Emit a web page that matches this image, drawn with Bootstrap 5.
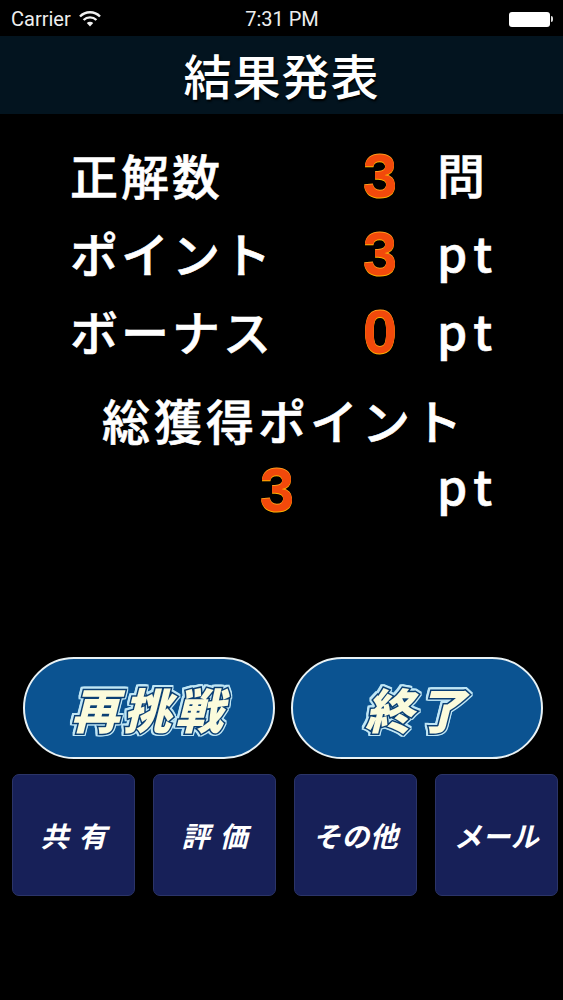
<!DOCTYPE html>
<html lang="ja">
<head>
<meta charset="utf-8">
<title>結果発表</title>
<link href="https://cdn.jsdelivr.net/npm/bootstrap@5.3.0/dist/css/bootstrap.min.css" rel="stylesheet">
<style>
html,body{background:#000;color:#fff;height:1000px;overflow:hidden;font-family:"Noto Sans CJK JP","Liberation Sans",sans-serif}
.status-strip{height:36px;padding:2px 10px 0 11px;font-family:Roboto,"Liberation Sans",sans-serif;font-size:20px;line-height:34px;color:#eee}
.status-side{flex:1 1 0}
.batt-body{width:41px;height:15px;background:#fff;border-radius:3px}
.batt-tip{width:2px;height:6px;background:#ddd;border-radius:0 2px 2px 0;margin-left:1px}
.title-strip{height:78px;background:#03141f;font-size:48px;font-weight:500;letter-spacing:1px;line-height:76px;text-shadow:1px 2px 2px #000}
.score-area{padding-top:23px}
.score-row{display:grid;grid-template-columns:253px 70px auto;column-gap:22px;height:78px;padding-left:70px;align-items:center;font-size:48px;font-weight:500;letter-spacing:3px;line-height:1;-webkit-text-stroke:.6px #fff}
.score-row>div:first-child{margin-top:-4px}
.score-unit{font-size:48px;font-weight:500;letter-spacing:7px;margin-top:-6px;-webkit-text-stroke:.6px #fff}
.score-value{font-family:"Liberation Sans",sans-serif;font-weight:700;font-size:62px;letter-spacing:0;text-align:center;color:#f2490b;-webkit-text-stroke:0;text-shadow:0 1px 0 #ffb400,0 -1px 0 #ff9a1a}
.total-head{margin-top:19px;height:60px;font-size:48px;font-weight:500;letter-spacing:4px;line-height:58px;text-align:center;padding-left:5px;-webkit-text-stroke:.6px #fff}
.total-row{display:grid;grid-template-columns:170px 70px 1fr;height:80px;padding-left:72px;align-items:center;line-height:1}
.total-row .score-unit{padding-left:125px;margin-top:-12px}
.action-row{margin-top:127px;padding:0 20px 0 23px;gap:16px}
.pill-btn{flex:0 0 252px;height:102px;border:2.5px solid #e9f2f5;border-radius:51px;background:#0b5391;display:flex;align-items:center;justify-content:center;padding:0}
.pill-label{font-size:48px;font-weight:900;font-style:italic;letter-spacing:4px;line-height:1;color:#fbfbdc;-webkit-text-stroke:3px #0a3f74;paint-order:stroke fill;filter:drop-shadow(1.5px 0 0 #bfe6f5) drop-shadow(-1.5px 0 0 #bfe6f5) drop-shadow(0 1.5px 0 #bfe6f5) drop-shadow(0 -1.5px 0 #bfe6f5)}
.tile-row{margin-top:15px;padding:0 6px 0 12px;gap:18px}
.tile-btn{flex:0 0 123px;height:122px;background:#172058;border:1px solid #2b3468;border-radius:7px;color:#fff;font-size:28px;font-weight:700;font-style:italic;display:flex;align-items:center;justify-content:center;padding:0;line-height:1;white-space:nowrap}
.tile-gap{letter-spacing:10px;margin-right:-10px}
.tile-wide{font-size:28px;letter-spacing:.5px}
</style>
</head>
<body>
<div class="status-strip d-flex align-items-center">
  <div class="status-side d-flex align-items-center gap-2">
    <span>Carrier</span>
    <svg width="22" height="16" viewBox="0 0 22 16" fill="none" stroke="#f2f2f2" stroke-width="2.4" aria-hidden="true"><path d="M1 5.5a14 14 0 0 1 20 0"/><path d="M4.6 9a9 9 0 0 1 12.8 0"/><path d="M11 15.5l-3.2-3.4a4.6 4.6 0 0 1 6.4 0z" fill="#f2f2f2" stroke="none"/></svg>
  </div>
  <div>7:31 PM</div>
  <div class="status-side d-flex align-items-center justify-content-end">
    <div class="batt-body"></div><div class="batt-tip"></div>
  </div>
</div>
<div class="title-strip text-center">結果発表</div>
<div class="score-area">
  <div class="score-row"><div>正解数</div><div class="score-value">3</div><div class="score-unit">問</div></div>
  <div class="score-row"><div>ポイント</div><div class="score-value">3</div><div class="score-unit">pt</div></div>
  <div class="score-row"><div>ボーナス</div><div class="score-value">0</div><div class="score-unit">pt</div></div>
  <div class="total-head">総獲得ポイント</div>
  <div class="total-row"><div></div><div class="score-value">3</div><div class="score-unit">pt</div></div>
</div>
<div class="action-row d-flex">
  <button type="button" class="btn pill-btn"><span class="pill-label">再挑戦</span></button>
  <button type="button" class="btn pill-btn"><span class="pill-label">終了</span></button>
</div>
<div class="tile-row d-flex">
  <button type="button" class="btn tile-btn"><span class="tile-gap">共有</span></button>
  <button type="button" class="btn tile-btn"><span class="tile-gap">評価</span></button>
  <button type="button" class="btn tile-btn"><span class="tile-wide">その他</span></button>
  <button type="button" class="btn tile-btn"><span class="tile-wide">メール</span></button>
</div>
<script src="https://cdn.jsdelivr.net/npm/bootstrap@5.3.0/dist/js/bootstrap.bundle.min.js"></script>
</body>
</html>
